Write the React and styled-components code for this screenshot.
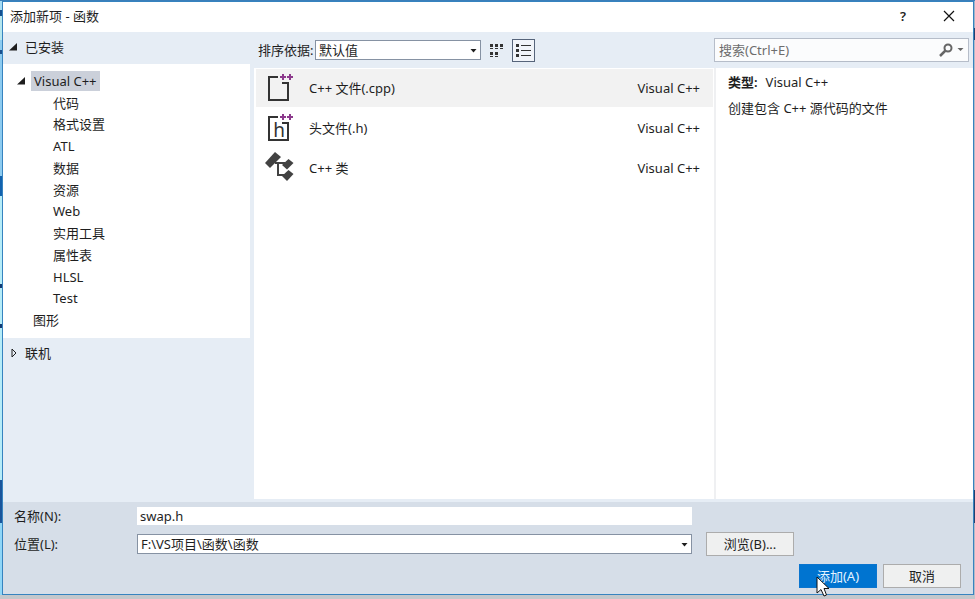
import React from "react";
import styled, {createGlobalStyle} from "styled-components";

const GlobalStyle = createGlobalStyle`
  * {
    box-sizing: border-box;
  }
  body {
    margin: 0;
    background: #c3c7cb;
  }
  body, button, input, select {
    font-family: "Noto Sans", "Noto Sans CJK SC", sans-serif;
    font-size: 13px;
    line-height: 18px;
    color: #1e1e1e;
  }
`;

//the strip of the editor that is still visible behind the dialog
const Desktop = styled.div`
  min-height: 100vh;
  display: flex;
  padding: 1px 1px 4px 2px;
  background:
    linear-gradient(#c3c7cb, #c3c7cb) bottom / 100% 4px no-repeat,
    linear-gradient(#3b7fba, #3b7fba) top / 100% 1px no-repeat,
    linear-gradient(#9fb3c8 28px, #24406e 28px 40px, #b3b9c6 40px 490px, #24406e 490px 523px, #b3b9c6 523px) right / 1px 100% no-repeat,
    linear-gradient(#a5dcf5 10px, #14508f 10px 16px, #b5e6ee 16px 40px, #8ccbf0 40px 50px,
      #1b4f8c 50px 54px, #8ccbf0 54px 176px, #1262ae 176px 196px, #b5ecf8 196px 284px,
      #123a73 284px 288px, #b5ecf8 288px 324px, #123a73 324px 328px, #b5ecf8 328px 480px,
      #1a559b 480px 523px, #8fd6f7 523px);
`;

const Dialog = styled.main`
  flex: 1;
  display: flex;
  flex-direction: column;
  border: 1px solid #3683bf;
  background: #e6edf5;
`;

const TitleBar = styled.header`
  height: 30px;
  display: flex;
  align-items: center;
  justify-content: space-between;
  padding: 0 12px 2px 7px;
  background: #fff;
`;

const Title = styled.h1`
  margin: 0;
  font-size: 13px;
  font-weight: normal;
`;

const WindowButtons = styled.div`
  display: flex;
  gap: 22px;
`;

const IconButton = styled.button`
  width: 24px;
  height: 24px;
  display: flex;
  align-items: center;
  justify-content: center;
  padding: 0;
  border: 0;
  background: none;
  font-weight: ${props => props.$bold ? "600" : "normal"};
`;

const Body = styled.div`
  flex: 1;
  display: grid;
  grid-template-columns: 247px minmax(0, 1fr) 259px;
`;

const Sidebar = styled.nav`
  display: flex;
  flex-direction: column;
`;

const Section = styled.button`
  height: 32px;
  display: flex;
  align-items: center;
  gap: 8px;
  padding: 0 6px 2px;
  border: 0;
  background: none;
  text-align: left;
`;

const Tree = styled.ul`
  height: 274px;
  display: grid;
  grid-auto-rows: 1fr;
  margin: 0;
  padding: 6px 0 7px;
  list-style: none;
  background: #fff;
`;

const TreeRow = styled.li`
  display: flex;
  align-items: center;
  gap: 6px;
  padding-left: ${props => props.$level === 0 ? "14px" : props.$level === 1 ? "27px" : "47px"};
`;

const TreeItem = styled.button`
  padding: 1px 3px;
  border: 0;
  background: ${props => props.$selected ? "#cbd0da" : "none"};
`;

const Middle = styled.section`
  display: flex;
  flex-direction: column;
  padding-left: 4px;
`;

const Toolbar = styled.div`
  height: 36px;
  display: flex;
  align-items: center;
  padding-left: 4px;
`;

const SortLabel = styled.label`
  width: 57px;
  white-space: nowrap;
`;

const SelectBox = styled.div`
  position: relative;
  display: flex;
  width: ${props => props.$wide ? "100%" : "166px"};
`;

const Select = styled.select`
  appearance: none;
  width: 100%;
  height: 20px;
  padding: 0 16px 0 3px;
  border: 1px solid #8692a3;
  border-radius: 0;
  background: #fff;
  line-height: 18px;
`;

const SelectArrow = styled.svg`
  position: absolute;
  right: 4px;
  top: 9px;
  pointer-events: none;
`;

const ViewButton = styled.button`
  width: 23px;
  height: 23px;
  display: flex;
  align-items: center;
  justify-content: center;
  margin-left: 4px;
  padding: 0;
  border: ${props => props.$active ? "1px solid #56647a" : "0"};
  background: ${props => props.$active ? "#f1f4f9" : "none"};
`;

const TemplateList = styled.ul`
  flex: 1;
  display: flex;
  flex-direction: column;
  gap: 2px;
  margin: 0 0 3px;
  padding: 1px 1px 0 2px;
  list-style: none;
  background: #fff;
`;

const Template = styled.button`
  width: 100%;
  height: 38px;
  display: flex;
  align-items: center;
  padding: 0 13px 0 9px;
  border: 0;
  background: ${props => props.$selected ? "#f2f2f2" : "#fff"};
  text-align: left;
`;

const TemplateName = styled.span`
  flex: 1;
  padding-left: 12px;
`;

const Side = styled.aside`
  display: flex;
  flex-direction: column;
`;

const SearchArea = styled.div`
  height: 36px;
  display: flex;
  align-items: center;
  padding-right: 4px;
`;

const SearchBox = styled.div`
  flex: 1;
  height: 24px;
  display: flex;
  align-items: center;
  gap: 4px;
  padding: 0 4px;
  border: 1px solid #b6bdc9;
  background: #fbfcfd;
`;

const SearchInput = styled.input`
  flex: 1;
  min-width: 0;
  padding: 0;
  border: 0;
  outline: none;
  background: none;
  &::placeholder {
    color: #6d6d6d;
    opacity: 1;
  }
`;

const Details = styled.div`
  flex: 1;
  margin-bottom: 3px;
  padding: 5px 12px;
  border-left: 2px solid #eff0f2;
  background: #fff;
`;

const DetailText = styled.p`
  margin: 0 0 8px;
`;

const TypeLabel = styled.strong`
  margin-right: 8px;
  font-weight: 600;
`;

const Footer = styled.form`
  display: flex;
  flex-direction: column;
  gap: 8px;
  padding: 2px 12px 6px 11px;
  background: #d6dee8;
`;

const Fields = styled.div`
  display: grid;
  grid-template-columns: 123px minmax(0, 1fr) 102px;
  grid-auto-rows: 24px;
  row-gap: 4px;
  align-items: center;
  padding-right: 167px;
`;

const NameInput = styled.input`
  width: 100%;
  height: 18px;
  padding: 0 3px;
  border: 0;
  outline: none;
  background: #fff;
`;

const Buttons = styled.div`
  display: flex;
  justify-content: flex-end;
  gap: 6px;
`;

const Button = styled.button`
  position: relative;
  width: ${props => props.$wide ? "88px" : "78px"};
  height: 24px;
  padding: 0;
  border: 1px solid ${props => props.$primary ? "#0a75cf" : "#acacac"};
  background: ${props => props.$primary ? "#0074d0" : "#eff0f0"};
  color: ${props => props.$primary ? "#e4f3ff" : "#1e1e1e"};
`;

const BrowseCell = styled.div`
  grid-column: 3;
  padding-left: 14px;
`;

const Pointer = styled.svg`
  position: absolute;
  left: 16px;
  top: 11px;
`;

const OpenArrow = () => (
    <svg width="8" height="8" viewBox="0 0 8 8"><path d="M8 0V7.500H0Z" fill="#1e1e1e"/></svg>
);

const ClosedArrow = () => (
    <svg width="8" height="10" viewBox="0 0 8 10"><path d="M3 1L7 5L3 9Z" fill="none" stroke="#1e1e1e"/></svg>
);

const DownArrow = () => (
    <SelectArrow width="7" height="4" viewBox="0 0 7 4"><path d="M0.500 0H6.500L3.500 3.500Z" fill="#1e1e1e"/></SelectArrow>
);

const FileIcon = ({letter}) => (
    <svg width="32" height="34" viewBox="0 0 32 34">
        <path d="M13 6H4V29H23V12H17" fill="none" stroke="#333" strokeWidth="2"/>
        <path d="M15 6H21M18 3V9M22 6H28M25 3V9" stroke="#8c3a8c" strokeWidth="2"/>
        {letter && <text x="14" y="26" textAnchor="middle" fontSize="19" fontFamily="Noto Sans" fill="#333">{letter}</text>}
    </svg>
);

const ClassIcon = () => (
    <svg width="32" height="34" viewBox="0 0 32 34">
        <g fill="#424242">
            <path d="M0 12L10 1L16 6L5 17Z"/>
            <path d="M17 14L23.500 8L28.500 12L22 18.500Z"/>
            <path d="M17 25L23.500 19L28.500 23L22 30Z"/>
        </g>
        <path d="M10 12H20M13 12V24H20" fill="none" stroke="#424242" strokeWidth="2"/>
    </svg>
);

const GridIcon = () => (
    <svg width="15" height="15" viewBox="0 0 15 15" fill="#333">
        {[0, 5, 10].map(x => <rect key={x} x={x + 1} y="1" width="3" height="3"/>)}
        {[0, 5, 10].map(x => <rect key={x} x={x + 1} y="5" width="3" height="1"/>)}
        {[0, 5].map(x => <rect key={x} x={x + 1} y="9" width="3" height="3"/>)}
        {[0, 5].map(x => <rect key={x} x={x + 1} y="13" width="3" height="1"/>)}
    </svg>
);

const ListIcon = () => (
    <svg width="15" height="15" viewBox="0 0 15 15" fill="#333">
        {[0, 5, 10].map(y => <rect key={y} x="0" y={y + 1} width="3" height="3"/>)}
        {[0, 5, 10].map(y => <rect key={y} x="5" y={y + 2} width="10" height="1"/>)}
    </svg>
);

const treeItems = [
    {name: "Visual C++", level: 0},
    {name: "代码", level: 2},
    {name: "格式设置", level: 2},
    {name: "ATL", level: 2},
    {name: "数据", level: 2},
    {name: "资源", level: 2},
    {name: "Web", level: 2},
    {name: "实用工具", level: 2},
    {name: "属性表", level: 2},
    {name: "HLSL", level: 2},
    {name: "Test", level: 2},
    {name: "图形", level: 1},
];

const templates = [
    {name: "C++ 文件(.cpp)", icon: <FileIcon/>},
    {name: "头文件(.h)", icon: <FileIcon letter="h"/>},
    {name: "C++ 类", icon: <ClassIcon/>},
];

const App = () => {
    return (
        <Desktop>
            <GlobalStyle/>
            <Dialog>
                <TitleBar>
                    <Title>添加新项 - 函数</Title>
                    <WindowButtons>
                        <IconButton $bold aria-label="帮助">?</IconButton>
                        <IconButton aria-label="关闭">
                            <svg width="12" height="12" viewBox="0 0 12 12">
                                <path d="M1 1L11 11M11 1L1 11" stroke="#111" strokeWidth="1.200"/>
                            </svg>
                        </IconButton>
                    </WindowButtons>
                </TitleBar>
                <Body>
                    <Sidebar>
                        <Section><OpenArrow/>已安装</Section>
                        <Tree>
                            {treeItems.map((item, i) => (
                                <TreeRow key={item.name} $level={item.level}>
                                    {i === 0 && <OpenArrow/>}
                                    <TreeItem $selected={i === 0}>{item.name}</TreeItem>
                                </TreeRow>
                            ))}
                        </Tree>
                        <Section><ClosedArrow/>联机</Section>
                    </Sidebar>
                    <Middle>
                        <Toolbar>
                            <SortLabel htmlFor="sort">排序依据:</SortLabel>
                            <SelectBox>
                                <Select id="sort"><option>默认值</option></Select>
                                <DownArrow/>
                            </SelectBox>
                            <ViewButton aria-label="小图标"><GridIcon/></ViewButton>
                            <ViewButton $active aria-label="列表"><ListIcon/></ViewButton>
                        </Toolbar>
                        <TemplateList>
                            {templates.map((item, i) => (
                                <li key={item.name}>
                                    <Template $selected={i === 0}>
                                        {item.icon}
                                        <TemplateName>{item.name}</TemplateName>
                                        <span>Visual C++</span>
                                    </Template>
                                </li>
                            ))}
                        </TemplateList>
                    </Middle>
                    <Side>
                        <SearchArea>
                            <SearchBox>
                                <SearchInput aria-label="搜索" placeholder="搜索(Ctrl+E)"/>
                                <svg width="14" height="14" viewBox="0 0 14 14">
                                    <circle cx="9" cy="5" r="3.500" fill="none" stroke="#666" strokeWidth="2"/>
                                    <path d="M6.500 7.500L1 13" stroke="#666" strokeWidth="2.500"/>
                                </svg>
                                <svg width="7" height="4" viewBox="0 0 7 4"><path d="M0.500 0H6.500L3.500 3Z" fill="#666"/></svg>
                            </SearchBox>
                        </SearchArea>
                        <Details>
                            <DetailText><TypeLabel>类型:</TypeLabel>Visual C++</DetailText>
                            <DetailText>创建包含 C++ 源代码的文件</DetailText>
                        </Details>
                    </Side>
                </Body>
                <Footer onSubmit={e => e.preventDefault()}>
                    <Fields>
                        <label htmlFor="name">名称(N):</label>
                        <NameInput id="name" defaultValue="swap.h"/>
                        <span/>
                        <label htmlFor="location">位置(L):</label>
                        <SelectBox $wide>
                            <Select id="location"><option>F:\VS项目\函数\函数</option></Select>
                            <DownArrow/>
                        </SelectBox>
                        <BrowseCell><Button type="button" $wide>浏览(B)...</Button></BrowseCell>
                    </Fields>
                    <Buttons>
                        <Button $primary>
                            添加(A)
                            <Pointer width="14" height="21" viewBox="0 0 14 21">
                                <path d="M1 1V17L5 13.500L8 20L10.500 19L8 12.500H13Z" fill="#fff" stroke="#111"/>
                            </Pointer>
                        </Button>
                        <Button type="button">取消</Button>
                    </Buttons>
                </Footer>
            </Dialog>
        </Desktop>
    );
}
export default App;
